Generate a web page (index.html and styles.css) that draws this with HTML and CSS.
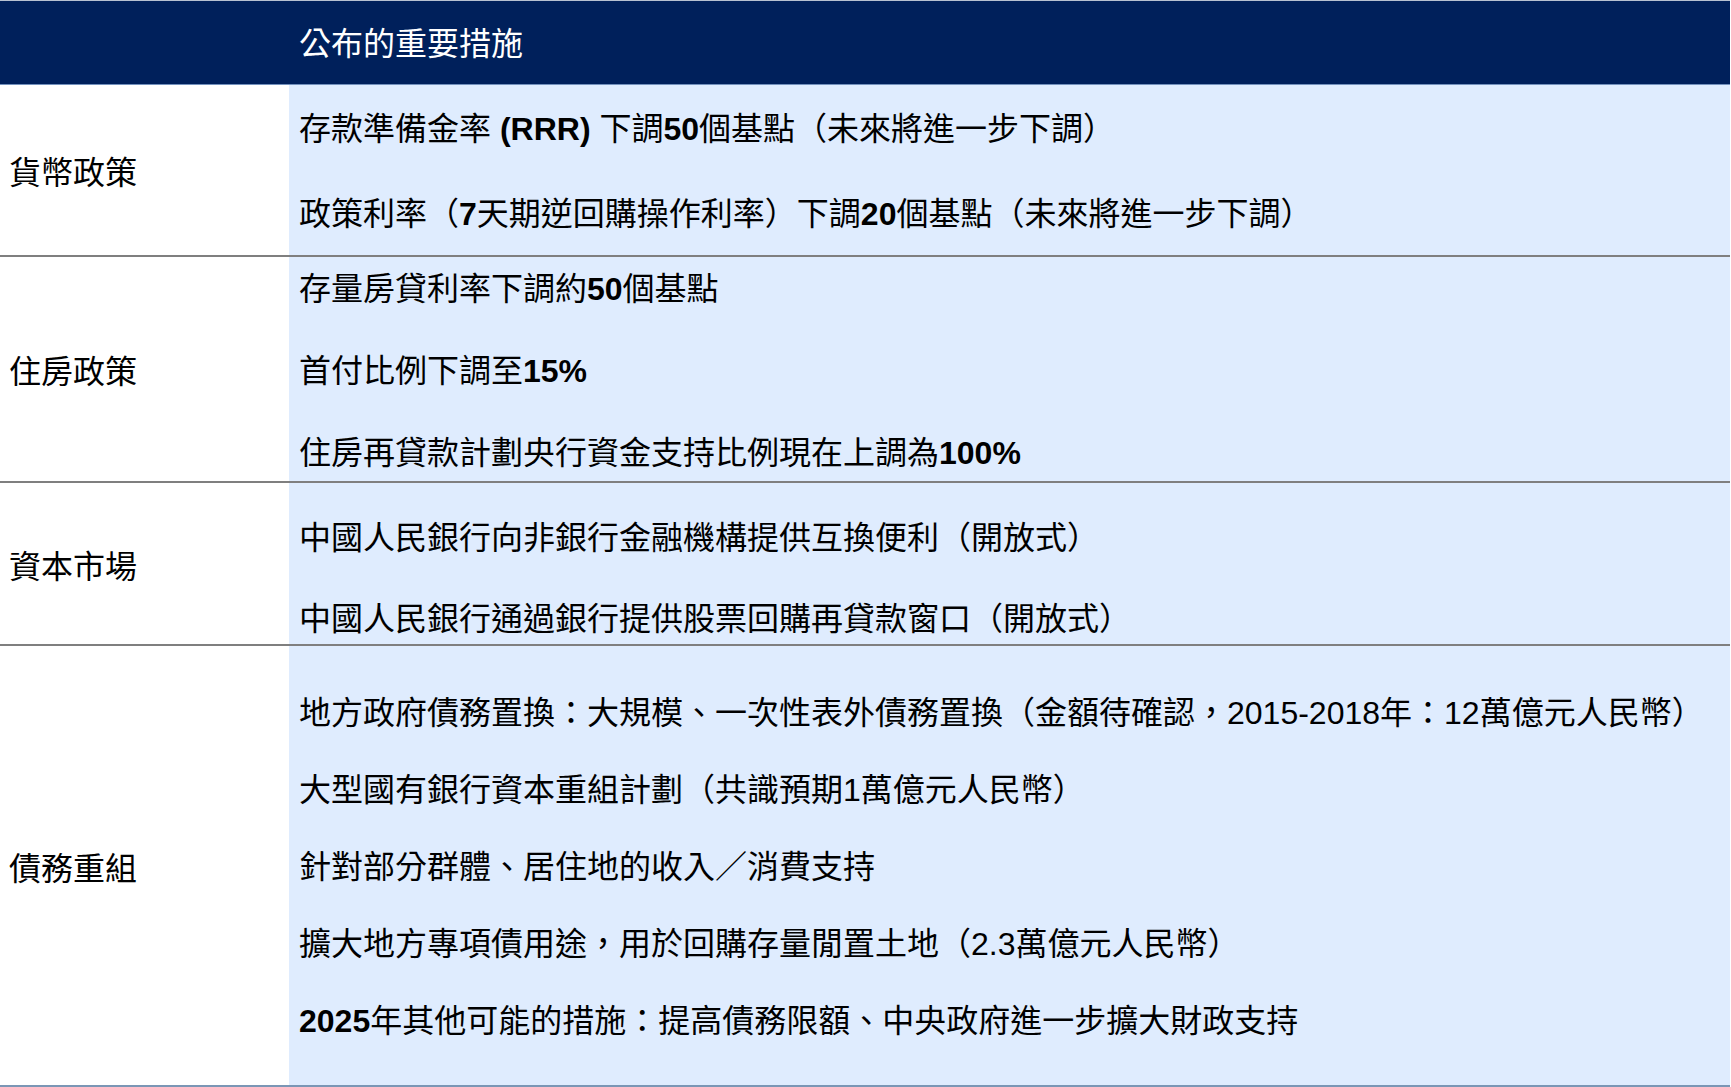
FILE: index.html
```html
<!DOCTYPE html>
<html lang="zh-Hant">
<head>
<meta charset="utf-8">
<title>公布的重要措施</title>
<link rel="stylesheet" href="styles.css">
</head>
<body>
<div class="table">
  <div class="row header">
    <div class="label"></div>
    <div class="content"><p>公布的重要措施</p></div>
  </div>
  <div class="row r1">
    <div class="label">貨幣政策</div>
    <div class="content">
      <p>存款準備金率 <b>(RRR)</b> 下調<b>50</b>個基點（未來將進一步下調）</p>
      <p>政策利率（<b>7</b>天期逆回購操作利率）下調<b>20</b>個基點（未來將進一步下調）</p>
    </div>
  </div>
  <div class="row r2">
    <div class="label">住房政策</div>
    <div class="content">
      <p>存量房貸利率下調約<b>50</b>個基點</p>
      <p>首付比例下調至<b>15%</b></p>
      <p>住房再貸款計劃央行資金支持比例現在上調為<b>100%</b></p>
    </div>
  </div>
  <div class="row r3">
    <div class="label">資本市場</div>
    <div class="content">
      <p>中國人民銀行向非銀行金融機構提供互換便利（開放式）</p>
      <p>中國人民銀行通過銀行提供股票回購再貸款窗口（開放式）</p>
    </div>
  </div>
  <div class="row r4">
    <div class="label">債務重組</div>
    <div class="content">
      <p>地方政府債務置換：大規模、一次性表外債務置換（金額待確認，2015-2018年：12萬億元人民幣）</p>
      <p>大型國有銀行資本重組計劃（共識預期1萬億元人民幣）</p>
      <p>針對部分群體、居住地的收入／消費支持</p>
      <p>擴大地方專項債用途，用於回購存量閒置土地（2.3萬億元人民幣）</p>
      <p><b>2025</b>年其他可能的措施：提高債務限額、中央政府進一步擴大財政支持</p>
    </div>
  </div>
</div>
</body>
</html>
```

FILE: styles.css
```css
html, body {
  margin: 0;
  padding: 0;
  background: #ffffff;
}

body {
  font-family: "Liberation Sans", "Noto Sans CJK TC", sans-serif;
  font-size: 32px;
  color: #000000;
}

.table {
  width: 1730px;
  border-top: 1px solid #b7c1d1;
}

.row {
  display: grid;
  grid-template-columns: 289px 1fr;
  overflow: hidden;
}

.label {
  display: flex;
  align-items: center;
  padding-left: 9px;
  background: #ffffff;
}

.content {
  display: flex;
  flex-direction: column;
  padding-left: 10px;
  background: #dfecfe;
}

.content p {
  margin: 0;
  line-height: 50px;
  white-space: nowrap;
}

.content b,
.label b {
  font-weight: 700;
}

.header {
  height: 83px;
  border-bottom: 1px solid #7391bd;
}

.header .label,
.header .content {
  background: #00205b;
}

.header .content {
  justify-content: center;
  padding-top: 3px;
  color: #ffffff;
}

.r1 {
  height: 170px;
  border-bottom: 2px solid #7f7f7f;
}
.r1 .content {
  padding-top: 19px;
  gap: 35px;
}

.r2 {
  height: 224px;
  border-bottom: 2px solid #7f7f7f;
}
.r2 .content {
  padding-top: 7px;
  gap: 32px;
}

.r3 {
  height: 161px;
  border-bottom: 2px solid #7f7f7f;
}
.r3 .content {
  padding-top: 30px;
  gap: 31px;
}

.r4 {
  height: 439px;
  border-bottom: 2px solid #7b96b5;
}
.r4 .content {
  padding-top: 42px;
  gap: 27px;
}
```
